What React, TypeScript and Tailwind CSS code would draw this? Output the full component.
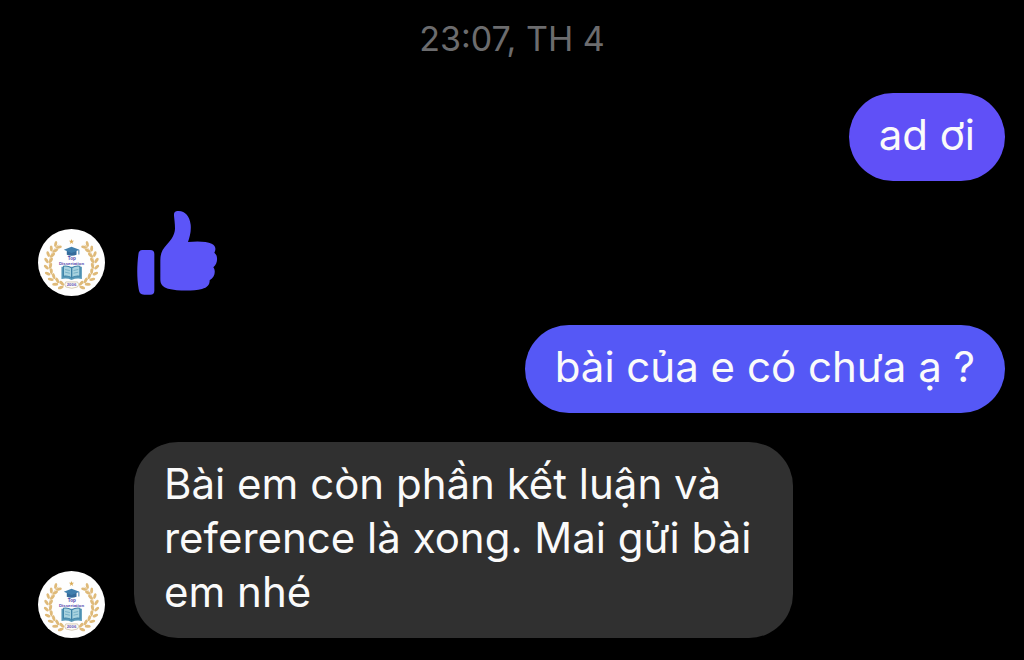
import type { ReactNode } from "react";

const LEAVES = [
  { x: 94, y: 194, r: 14 },
  { x: 79, y: 185, r: 28 },
  { x: 67, y: 171, r: 42 },
  { x: 59, y: 155, r: 56 },
  { x: 56, y: 137, r: 72 },
  { x: 57, y: 119, r: 88 },
  { x: 62, y: 102, r: 104 },
  { x: 71, y: 87, r: 118 },
  { x: 83, y: 75, r: 134 },
];

function Laurel() {
  return (
    <g>
      <path d="M103 194C54 176 42 112 86 73" fill="none" stroke="#dcb878" strokeWidth="2" />
      {LEAVES.map((leaf) => (
        <g key={leaf.y} transform={`translate(${leaf.x} ${leaf.y}) rotate(${leaf.r})`} fill="#dfba79">
          <ellipse cx="-3" cy="6" rx="9" ry="4.4" transform="rotate(-32)" />
          <ellipse cx="-3" cy="-6" rx="9" ry="4.4" transform="rotate(32)" />
        </g>
      ))}
    </g>
  );
}

function Avatar() {
  return (
    <svg viewBox="25 26 200 200" className="size-[67px] shrink-0" role="img" aria-label="Top Dissertation">
      <circle cx="125" cy="126" r="100" fill="#fefefe" />
      <Laurel />
      <g transform="translate(250 0) scale(-1 1)">
        <Laurel />
      </g>
      <path d="M125 56l2 5h6l-5 4 2 6-5-4-5 4 2-6-5-4h6z" fill="#d9ac58" />
      <path d="M111 90v13q14 6 29 0V90l-15 5z" fill="#346b9b" />
      <path d="M102 88l23-9 24 9-24 10z" fill="#3f7fae" />
      <path d="M147 89v13" stroke="#3f7fae" strokeWidth="3" />
      <text x="126" y="120" textAnchor="middle" className="font-['Liberation_Sans'] text-[14px] font-bold" fill="#5146ad">
        Top
      </text>
      <text x="125" y="134" textAnchor="middle" className="font-['Liberation_Sans'] text-[13px] font-bold" fill="#5146ad">
        Dissertation
      </text>
      <path d="M95 139v36q18-3 30 3 14-6 31-3v-36" fill="#5799b8" />
      <path d="M101 137q14-2 24 5v29q-10-6-24-4zM150 137q-14-2-24 5v29q10-6 24-4z" fill="#a9d3df" stroke="#3f83a8" strokeWidth="3" />
      <path d="M106 147l14 3M106 155l14 3M131 150l14-3M131 158l14-3" stroke="#5c9fbb" strokeWidth="2" />
      <path d="M108 184h35q7 7 0 15l-17 4-18-4q-6-8 0-15z" fill="#fffdf8" stroke="#c5b495" strokeWidth="2" />
      <text x="125" y="197" textAnchor="middle" className="font-['Liberation_Sans'] text-[13px] font-bold" fill="#6557b5">
        2006
      </text>
    </svg>
  );
}

function Like() {
  return (
    <svg viewBox="38 32 243 256" className="h-[86px] w-[81px]" fill="#5c55f8" role="img" aria-label="Like">
      <path d="M54 151H78Q90 151 90 163V273Q90 285 78 285H60C48 285 45 279 43 268C37 235 38 196 42 165Q43 151 54 151Z" />
      <path d="M149 48C148 37 153 33 163 34C183 35 196 50 199 75C201 96 196 112 191 127C219 124 247 125 262 132C274 138 276 149 270 159C281 167 282 190 267 203C275 213 272 233 256 242C256 256 249 264 233 268C203 275 161 274 131 267C115 263 108 254 108 239V182C108 161 114 149 127 135C142 119 151 105 152 87C152 71 150 59 149 48Z" />
    </svg>
  );
}

function Bubble({ className, children }: { className: string; children: ReactNode }) {
  return <p className={`rounded-[44px] px-[30px] pt-[15px] pb-[19px] text-[42px] leading-[54px] text-[#fafafa] ${className}`}>{children}</p>;
}

export default function App() {
  return (
    <main className="flex min-h-screen flex-col bg-black pt-[19px] font-[Inter,'Noto_Sans',sans-serif]">
      <time className="self-center text-[34px] leading-[40px] text-[#6c6c6e]">23:07, TH 4</time>
      <div className="flex flex-col gap-[29px] pt-[34px] pr-[19px] pl-[38px]">
        <Bubble className="self-end bg-[#6050f7]">ad ơi</Bubble>
        <div className="flex items-end gap-8">
          <Avatar />
          <Like />
        </div>
        <Bubble className="self-end bg-[#5558f6]">bài của e có chưa ạ ?</Bubble>
        <div className="flex items-end gap-[29px]">
          <Avatar />
          <Bubble className="max-w-[659px] bg-[#303030]">Bài em còn phần kết luận và reference là xong. Mai gửi bài em nhé</Bubble>
        </div>
      </div>
    </main>
  );
}
